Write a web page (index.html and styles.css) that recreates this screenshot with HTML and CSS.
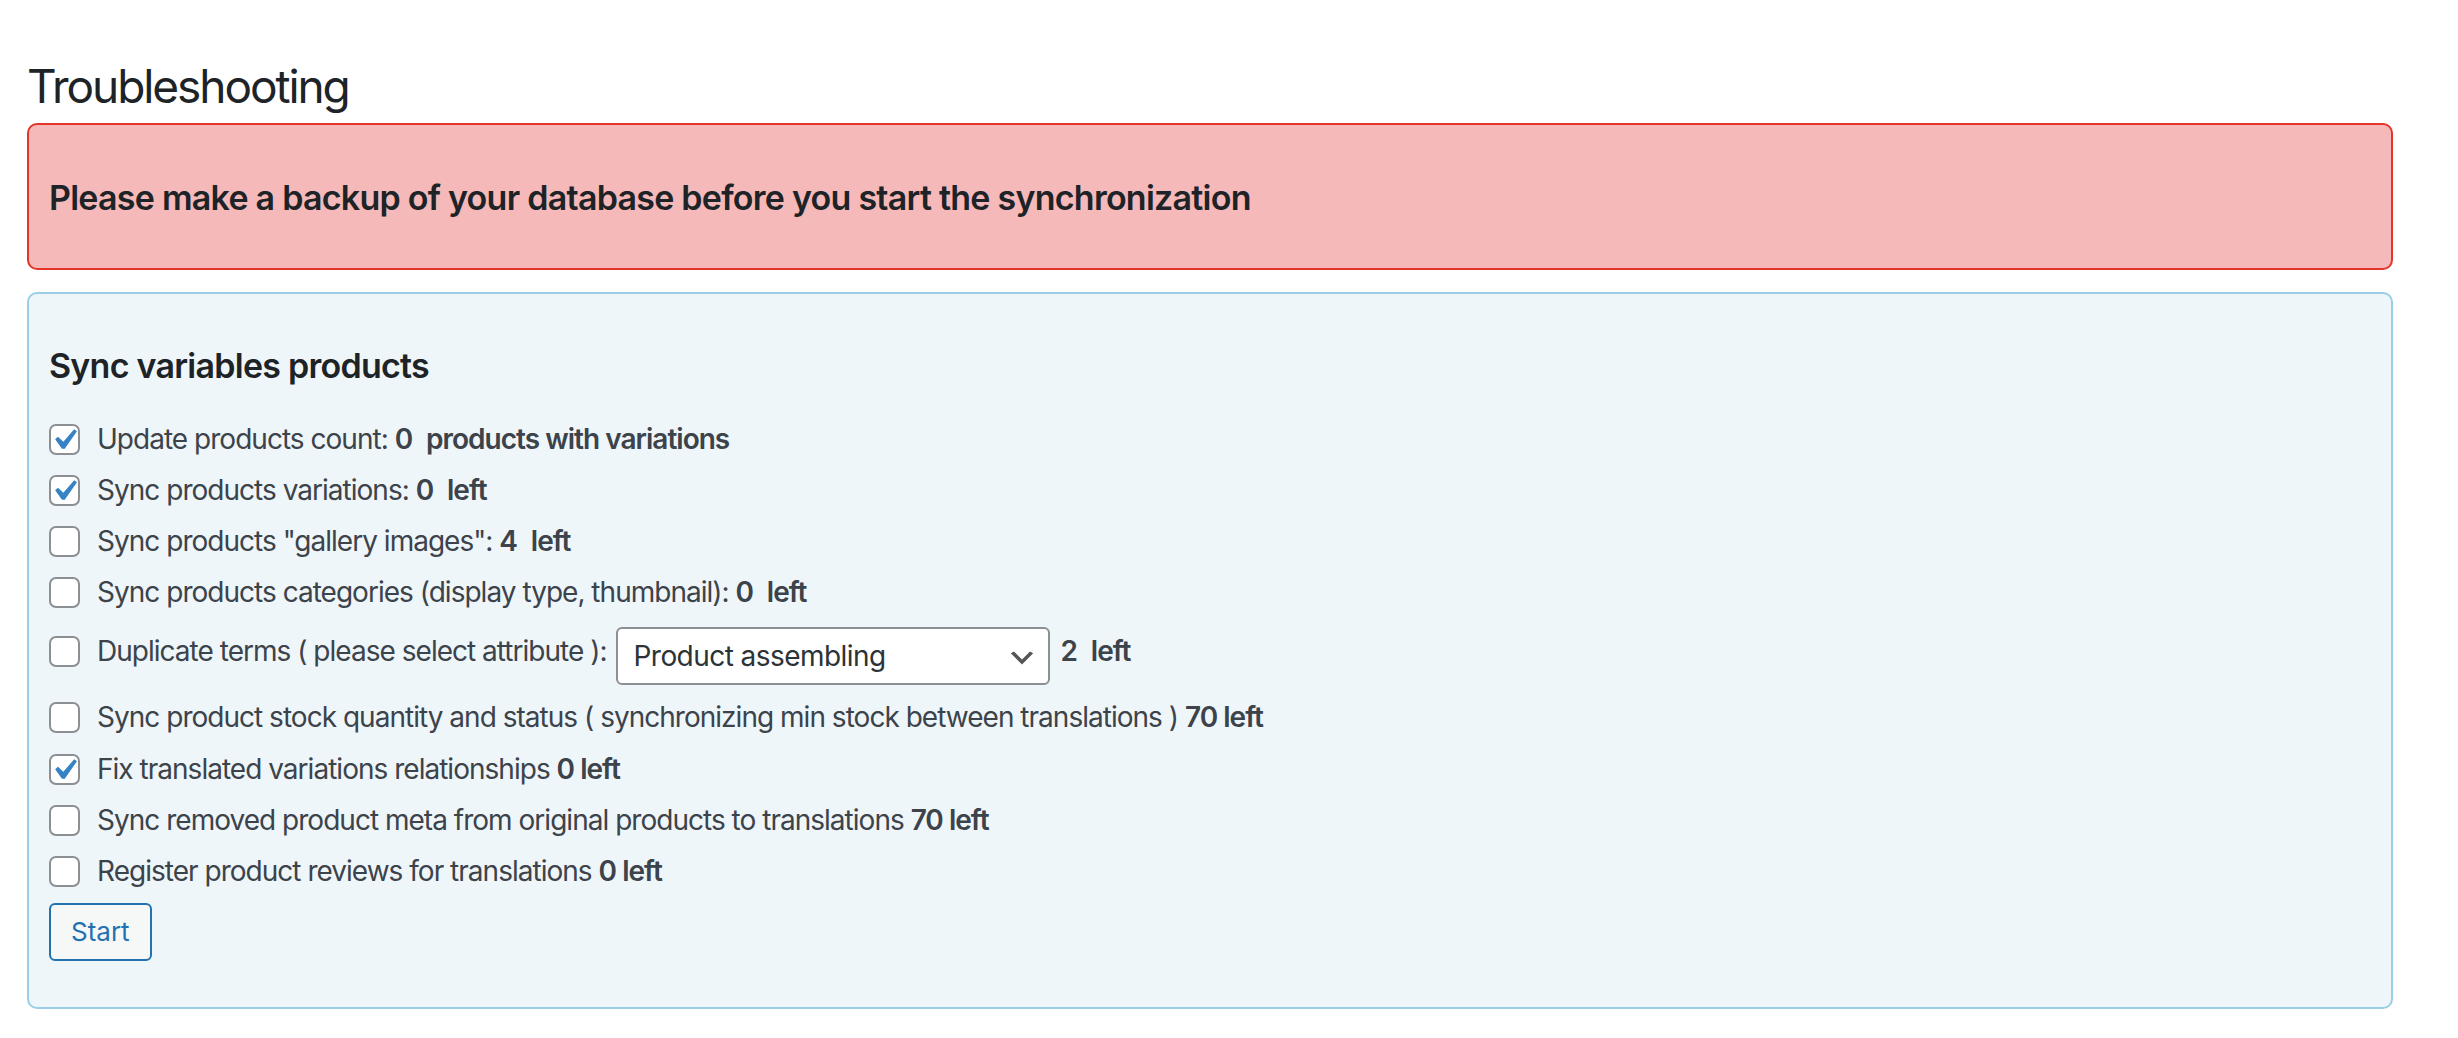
FILE: index.html
```html
<!DOCTYPE html>
<html lang="en">
<head>
<meta charset="utf-8">
<title>Troubleshooting</title>
<link rel="stylesheet" href="styles.css">
</head>
<body>
<div class="wrap">
  <h1 class="page-title">Troubleshooting</h1>

  <div class="notice-error">
    <h3 class="notice-text">Please make a backup of your database before you start the synchronization</h3>
  </div>

  <div class="section">
    <h3 class="section-title">Sync variables products</h3>
    <ul class="options">
      <li class="row">
        <span class="cb"><svg class="tick" viewBox="0 0 20 20"><path d="M14.83 4.89l1.34.94-5.81 8.38H9.02L5.78 9.67l1.34-1.25 2.57 2.4z"/></svg></span>
        <span class="txt">Update products count: <b>0</b>&nbsp; <b>products with variations</b></span>
      </li>
      <li class="row">
        <span class="cb"><svg class="tick" viewBox="0 0 20 20"><path d="M14.83 4.89l1.34.94-5.81 8.38H9.02L5.78 9.67l1.34-1.25 2.57 2.4z"/></svg></span>
        <span class="txt">Sync products variations: <b>0</b>&nbsp; <b>left</b></span>
      </li>
      <li class="row">
        <span class="cb"></span>
        <span class="txt">Sync products "gallery images": <b>4</b>&nbsp; <b>left</b></span>
      </li>
      <li class="row">
        <span class="cb"></span>
        <span class="txt">Sync products categories (display type, thumbnail): <b>0</b>&nbsp; <b>left</b></span>
      </li>
      <li class="row row-select">
        <span class="cb"></span>
        <span class="txt">Duplicate terms ( please select attribute ):</span>
        <span class="select">Product assembling<svg class="chev" viewBox="0 0 20 20"><path d="M5 6l5 5 5-5 2 1-7 7-7-7 2-1z"/></svg></span>
        <span class="txt"><b>2</b>&nbsp; <b>left</b></span>
      </li>
      <li class="row">
        <span class="cb"></span>
        <span class="txt">Sync product stock quantity and status ( synchronizing min stock between translations ) <b>70 left</b></span>
      </li>
      <li class="row">
        <span class="cb"><svg class="tick" viewBox="0 0 20 20"><path d="M14.83 4.89l1.34.94-5.81 8.38H9.02L5.78 9.67l1.34-1.25 2.57 2.4z"/></svg></span>
        <span class="txt">Fix translated variations relationships <b>0 left</b></span>
      </li>
      <li class="row">
        <span class="cb"></span>
        <span class="txt">Sync removed product meta from original products to translations <b>70 left</b></span>
      </li>
      <li class="row">
        <span class="cb"></span>
        <span class="txt">Register product reviews for translations <b>0 left</b></span>
      </li>
    </ul>
    <button class="button" type="button">Start</button>
  </div>
</div>
</body>
</html>
```

FILE: styles.css
```css
html, body {
  margin: 0;
  padding: 0;
  background: #ffffff;
}

body {
  font-family: Inter, "Noto Sans", sans-serif;
  color: #3c434a;
  font-size: 28px;
}

.wrap {
  padding: 0 65px 40px 27px;
}

.page-title {
  margin: 0;
  padding-top: 56px;
  font-size: 46px;
  line-height: 60px;
  font-weight: 400;
  letter-spacing: -0.045em;
  color: #1d2327;
}

.notice-error {
  margin-top: 7px;
  background: #f5b9b9;
  border: 2px solid #e4352b;
  border-radius: 10px;
  padding: 51px 20px 48px;
}

.notice-text,
.section-title {
  margin: 0;
  font-size: 34px;
  line-height: 44px;
  font-weight: 600;
  letter-spacing: -0.022em;
  color: #1d2327;
}

.section {
  margin-top: 22px;
  background: #eff6fa;
  border: 2px solid #9acee6;
  border-radius: 10px;
  padding: 50px 20px 46px;
}

.options {
  list-style: none;
  margin: 31.5px 0 0;
  padding: 0;
}

.row {
  display: flex;
  align-items: center;
  min-height: 39.2px;
  margin-bottom: 12px;
  line-height: 39.2px;
}

.txt {
  letter-spacing: -0.035em;
}

.row-select {
  align-items: flex-start;
  margin-bottom: 13.5px;
}

.row-select .cb {
  margin-top: 11.5px;
}

.row-select .txt {
  margin-top: 7.5px;
}

.cb {
  position: relative;
  flex: none;
  width: 31px;
  height: 31px;
  box-sizing: border-box;
  border: 2px solid #8c8f94;
  border-radius: 7px;
  background: #ffffff;
  margin-right: 17px;
}

.tick {
  position: absolute;
  left: -8.5px;
  top: -7px;
  width: 42px;
  height: 42px;
  fill: #3582c4;
}

.txt b {
  font-weight: 600;
}

.select {
  position: relative;
  flex: none;
  box-sizing: border-box;
  width: 434px;
  height: 58px;
  margin: 2.5px 11px 0 9px;
  padding: 0 48px 0 16px;
  border: 2px solid #8c8f94;
  border-radius: 6px;
  background: #ffffff;
  color: #2c3338;
  font-size: 28px;
  line-height: 54px;
  letter-spacing: -0.02em;
  white-space: nowrap;
}

.chev {
  position: absolute;
  right: 10px;
  top: 13px;
  width: 32px;
  height: 32px;
  fill: #555555;
}

.button {
  display: block;
  margin-top: 1px;
  height: 58px;
  box-sizing: border-box;
  padding: 0 20px;
  border: 2px solid #2271b1;
  border-radius: 6px;
  background: #f6f7f7;
  color: #2271b1;
  font-family: Inter, "Noto Sans", sans-serif;
  font-size: 26px;
  line-height: 54px;
  cursor: pointer;
}
```
